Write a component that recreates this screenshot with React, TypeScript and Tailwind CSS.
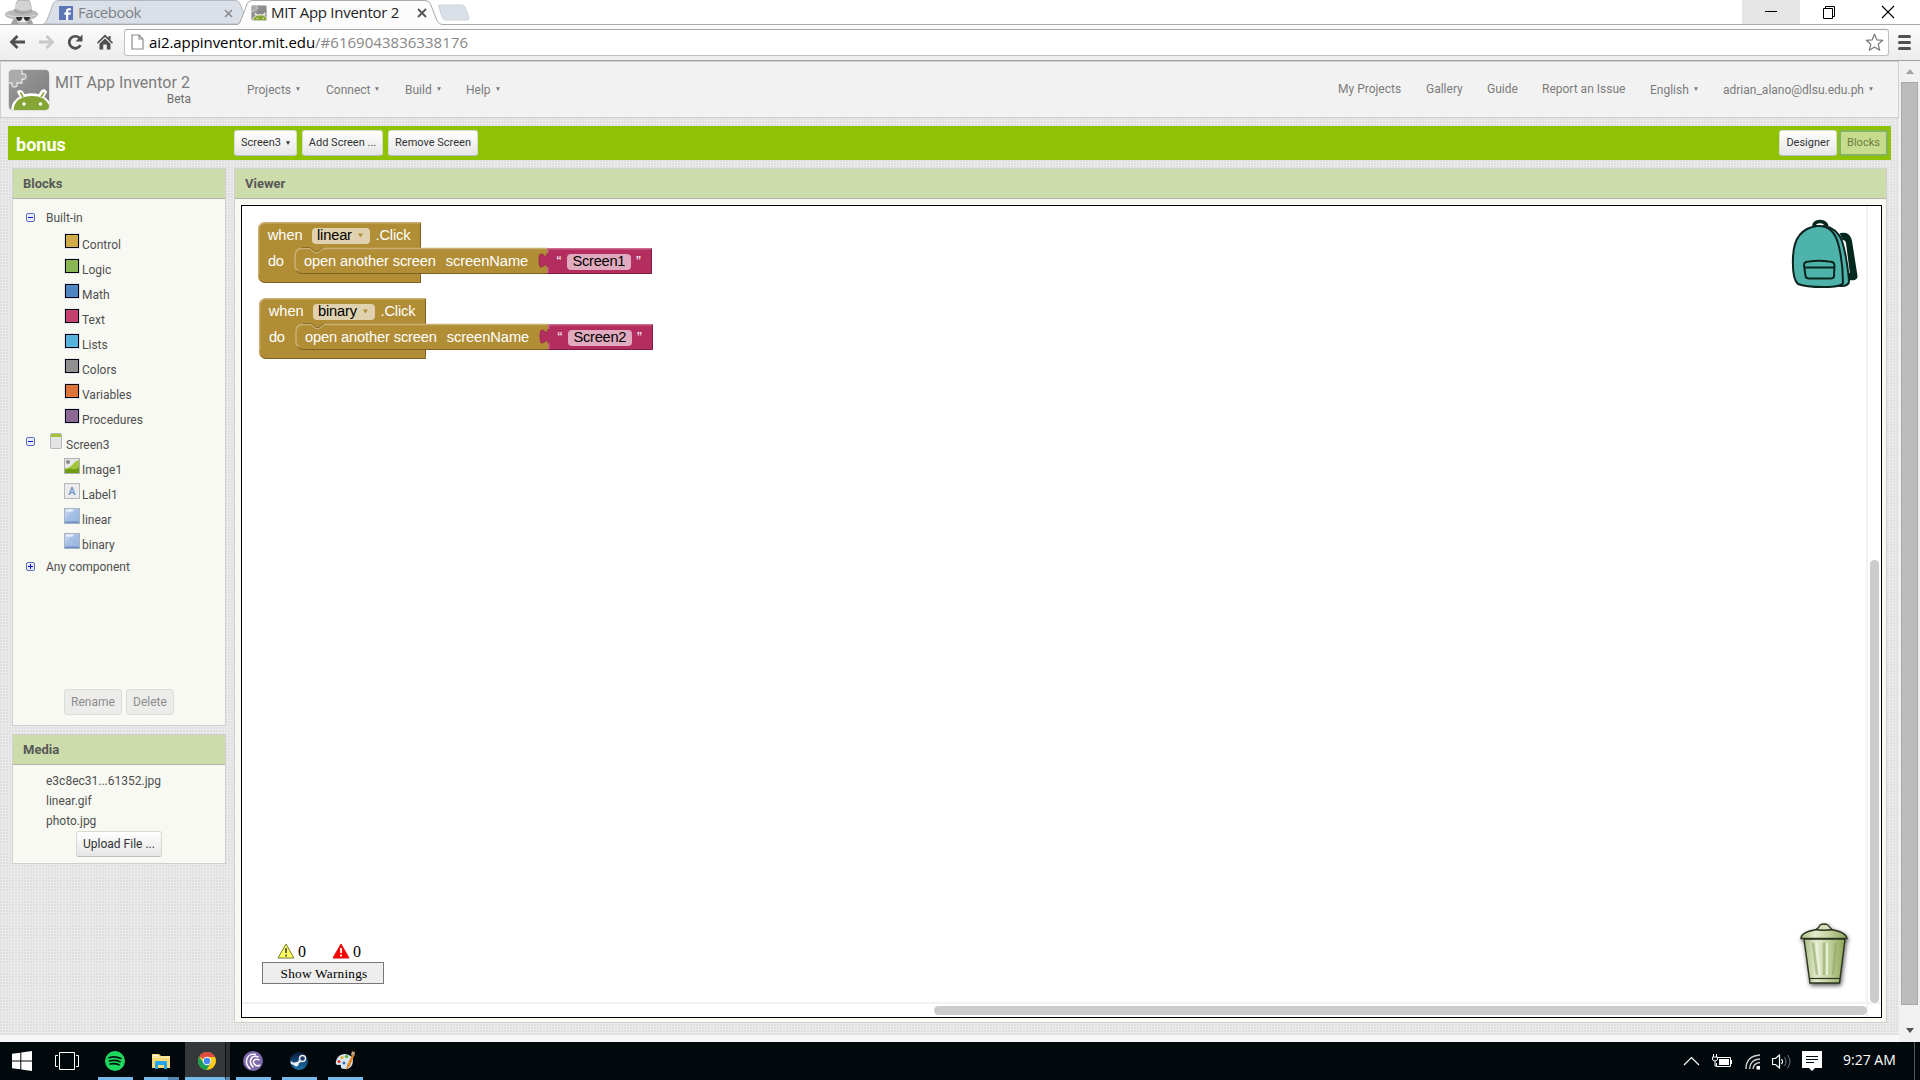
import React from 'react';

const Caret = ({ className = '' }: { className?: string }) => (
  <svg className={className} width="4" height="4" viewBox="0 0 4 4">
    <path d="M0 0.300H4L2 4Z" fill="currentColor" />
  </svg>
);

const AppLogo = ({ size }: { size: number }) => (
  <svg width={size} height={size} viewBox="0 0 42 42" className="block shrink-0">
    <defs>
      <linearGradient id="logo-grey" x1="0" y1="0" x2="1" y2="1">
        <stop offset="0" stopColor="#9a9a9a" />
        <stop offset="1" stopColor="#7d7d7d" />
      </linearGradient>
      <clipPath id="logo-clip">
        <rect x="1" y="1" width="40" height="40" rx="4" />
      </clipPath>
    </defs>
    <rect x="0.5" y="0.5" width="41" height="41" rx="4.5" fill="#c9c9c9" />
    <g clipPath="url(#logo-clip)">
      <rect x="1" y="1" width="40" height="40" fill="url(#logo-grey)" />
      <path d="M1 1H14V5Q18 4 18 8Q18 11 14 10V14H9Q10 18 6.5 18Q3 18 4 14H1Z" fill="#a9abac" />
      <path d="M14 1V5Q18 4 18 8Q18 11 14 10V14H9Q10 18 6.500 18Q3 18 4 14H1" fill="none" stroke="#e4e4e4" strokeWidth="1.300" />
      <path d="M4 41Q5 32 13 28L10 23Q12 21 14 23L16.5 26.5Q24 24 31 26.5L34 22Q36 20 38 23L35 28Q42 32 43 41Z" fill="#fff" stroke="#fff" strokeWidth="2" />
      <path d="M15 28L12.500 23.500M33 28L36 23.500" fill="none" stroke="#85a634" strokeWidth="1.600" />
      <path d="M5.500 41Q7 27 24 27Q40 27 42.500 41Z" fill="#85a634" />
      <circle cx="16" cy="35" r="1.8" fill="#fff" />
      <circle cx="32.500" cy="35" r="1.8" fill="#fff" />
    </g>
  </svg>
);

const Incognito = () => (
  <svg width="36" height="24" viewBox="0 0 36 24" className="block">
    <path d="M11 9Q12 0 14 0H25Q27 1 28 10Q35 12 34 15Q31 19 27 19L29 24H7L9 19Q2 18 1 15Q0 12 9 10Z" fill="#b9b9b9" />
    <path d="M11 8Q13 1 15 1H24Q26 2 27 9Q18 13 11 8Z" fill="#d4d4d4" />
    <path d="M10 9Q19 14 28 10L28 12Q19 16 10 12Z" fill="#a2a2a2" />
    <path d="M2 14Q18 19 33 14Q30 17 26 17H10Q4 17 2 14Z" fill="#d8d8d8" />
    <path d="M12 17H25L24 21Q19 24 13 21Z" fill="#ececec" />
    <path d="M12 17H18.500L18 19Q17 21 15 21Q12.500 21 12 17ZM19.500 17H26Q25.500 21 23 21Q20.500 21 19.500 17Z" fill="#333" />
    <path d="M7 24Q9 20 12 19L14 24ZM29 24Q28 20 25 19L23 24Z" fill="#a2a2a2" />
  </svg>
);

const Browser = () => (
  <div className="font-['Open_Sans',sans-serif]">
    <div className="relative flex h-6 bg-white">
      <div className="ml-1 w-9">
        <Incognito />
      </div>
      <div className="relative flex h-6 w-[202px] items-center">
        <svg width="202" height="24" viewBox="0 0 202 24" className="absolute left-[3px] top-0">
          <path d="M0.5 24Q3 23 4 20L10 4Q11.500 0.500 15 0.500H192Q196 0.500 197 4L201 14L196 24Z" fill="#dbe0e8" stroke="#b4b8bd" />
        </svg>
        <svg width="14" height="14" viewBox="0 0 14 14" className="relative ml-[19px] mt-px">
          <rect width="14" height="14" fill="#5d77b5" />
          <path d="M9.200 14V8.700H11.500L11.900 6.600H9.200V5.200Q9.200 4.200 10.400 4.200H12V2.200H9.800Q7 2.200 7 5V6.600H5.300V8.700H7V14Z" fill="#fff" />
        </svg>
        <span className="relative ml-[5px] w-[140px] text-[15px] leading-6 tracking-[-0.47px] text-[#7c8087]">Facebook</span>
        <svg width="9" height="9" viewBox="0 0 9 9" className="relative ml-[6px] mt-[2px]">
          <path d="M1 1L8 8M8 1L1 8" stroke="#878b90" strokeWidth="1.600" />
        </svg>
      </div>
      <div className="relative flex h-[25px] w-[204px] items-center">
        <svg width="206" height="25" viewBox="0 0 206 25" className="absolute left-[-5px] top-0">
          <path d="M0 25Q3 24 4 20L10 4Q11.500 0.500 15 0.500H188Q192 0.500 193.500 4L199 18Q201 24.500 206 24.500V25Z" fill="#fcfcfc" />
          <path d="M0 24.500Q3 24 4 20L10 4Q11.500 0.500 15 0.500H188Q192 0.500 193.500 4L199 18Q201 24.500 206 24.500" fill="none" stroke="#a9a9a9" />
        </svg>
        <div className="relative ml-[9px]">
          <AppLogo size={16} />
        </div>
        <span className="relative mb-[2px] ml-1 w-[146px] text-[15px] leading-6 tracking-[-0.28px] text-[#222]">MIT App Inventor 2</span>
        <svg width="10" height="10" viewBox="0 0 10 10" className="relative">
          <path d="M1 1L9 9M9 1L1 9" stroke="#555" strokeWidth="1.800" />
        </svg>
      </div>
      <svg width="34" height="18" viewBox="0 0 34 18" className="ml-[-9px] mt-1">
        <path d="M1.500 1H24Q27 1 28 3L32 13Q33 16 30 16H9Q6 16 5 13Z" fill="#dbe0e8" stroke="#cfd3d9" />
      </svg>
      <div className="ml-auto flex">
        <div className="flex h-6 w-[58px] items-center justify-center bg-[#e5e5e5]">
          <div className="mt-[-1px] h-px w-3 bg-black" />
        </div>
        <div className="flex w-[58px] items-center justify-center">
          <svg width="14" height="14" viewBox="0 0 14 14">
            <path d="M1.500 3.500H10.500V13.500H1.500ZM3.500 3.500V1.500H12.500V11.500H10.500" fill="none" stroke="#000" />
          </svg>
        </div>
        <div className="flex w-[62px] items-center justify-center pr-[2px]">
          <svg width="14" height="14" viewBox="0 0 14 14">
            <path d="M1 1L13 13M13 1L1 13" stroke="#000" strokeWidth="1.100" />
          </svg>
        </div>
      </div>
    </div>
    <div className="flex h-[37px] items-center border-b border-t border-b-[#a3a3a3] border-t-[#a9a9a9] bg-gradient-to-b from-[#fbfbfb] to-[#ececec] pb-px">
      <svg width="17" height="16" viewBox="0 0 17 16" className="ml-[9px]">
        <path d="M16 8H3M8.500 2L2.500 8L8.500 14" fill="none" stroke="#4f4f4f" strokeWidth="2.800" />
      </svg>
      <svg width="17" height="16" viewBox="0 0 17 16" className="ml-[12px]">
        <path d="M1 8H14M8.500 2L14.500 8L8.500 14" fill="none" stroke="#c8c8c8" strokeWidth="2.800" />
      </svg>
      <svg width="17" height="16" viewBox="0 0 17 16" className="ml-[12px]">
        <path d="M13.500 11.200A6 6 0 1 1 12.500 4" fill="none" stroke="#4f4f4f" strokeWidth="2.700" />
        <path d="M15.500 0.500V7.500H8.500Z" fill="#4f4f4f" />
      </svg>
      <svg width="16" height="16" viewBox="0 0 16 16" className="ml-[13px]">
        <path d="M8 0.500L11.500 4V2H13.500V6L16 8.500L15 9.700L8 3L1 9.700L0 8.500Z" fill="#4f4f4f" />
        <path d="M8 4.500L13.500 9.700V15.500H9.800V10.500H6.200V15.500H2.500V9.700Z" fill="#4f4f4f" />
      </svg>
      <div className="ml-[11px] flex h-[27px] w-[1765px] items-center rounded-[3px] border border-[#c0c0c0] border-t-[#a3a3a3] bg-white">
        <svg width="13" height="16" viewBox="0 0 13 16" className="ml-[6px]">
          <path d="M1 1H8L12 5V15H1ZM8 1V5H12" fill="#fff" stroke="#8b8b8b" strokeWidth="1.200" />
        </svg>
        <span className="mb-px ml-[5px] text-[15px] leading-5 tracking-[-0.07px] text-black">ai2.appinventor.mit.edu</span>
        <span className="mb-px text-[15px] leading-5 tracking-[0.03px] text-[#868686]">/#6169043836338176</span>
        <svg width="19" height="19" viewBox="0 0 19 19" className="ml-auto mr-1">
          <path d="M9.500 1.200L11.800 6.800L17.800 7.300L13.200 11.200L14.700 17.200L9.500 14L4.300 17.200L5.800 11.200L1.200 7.300L7.200 6.800Z" fill="none" stroke="#7a7a7a" strokeWidth="1.200" strokeLinejoin="round" />
        </svg>
      </div>
      <div className="ml-[9px] flex w-[13px] flex-col gap-[3px]">
        <div className="h-[3px] rounded-sm bg-[#505050]" />
        <div className="h-[3px] rounded-sm bg-[#505050]" />
        <div className="h-[3px] rounded-sm bg-[#505050]" />
      </div>
    </div>
  </div>
);

const MenuItem = ({ label, className, caret = true }: { label: string; className: string; caret?: boolean }) => (
  <div className={`flex shrink-0 items-center whitespace-nowrap ${className}`}>
    {label}
    {caret && <Caret className="mb-[2px] ml-[5px]" />}
  </div>
);

const Header = () => (
  <div className="flex h-[57px] w-[1899px] border border-[#cfcfcf] bg-[#f2f2f2] text-xs text-[#7c7c7c]">
    <div className="ml-[7px] mt-[7px]">
      <AppLogo size={42} />
    </div>
    <div className="ml-[5px] mt-[11px] w-[136px] text-right">
      <div className="whitespace-nowrap text-left text-base leading-5 tracking-[0.03px]">MIT App Inventor 2</div>
      <div className="mt-[-1px] text-xs leading-[14px] text-[#6e6e6e]">Beta</div>
    </div>
    <div className="ml-[56px] flex h-[57px] items-center">
      <MenuItem label="Projects" className="mb-px w-[79px]" />
      <MenuItem label="Connect" className="mb-px w-[79px]" />
      <MenuItem label="Build" className="mb-px w-[61px]" />
      <MenuItem label="Help" className="mb-px w-[60px]" />
    </div>
    <div className="ml-auto flex h-[57px] items-center">
      <MenuItem label="My Projects" caret={false} className="mb-[3px] w-[88px]" />
      <MenuItem label="Gallery" caret={false} className="mb-[3px] w-[61px]" />
      <MenuItem label="Guide" caret={false} className="mb-[3px] w-[55px]" />
      <MenuItem label="Report an Issue" caret={false} className="mb-[3px] w-[108px]" />
      <MenuItem label="English" className="mb-px w-[73px]" />
      <MenuItem label="adrian_alano@dlsu.edu.ph" className="mb-px w-[175px]" />
    </div>
  </div>
);

const BarButton = ({ label, className, caret = false }: { label: string; className: string; caret?: boolean }) => (
  <div className={`flex h-[26px] items-center justify-center whitespace-nowrap rounded-[3px] border text-[11px] ${className}`}>
    {label}
    {caret && <Caret className="mb-px ml-[5px]" />}
  </div>
);

const light = 'border-[#d6dccb] border-b-[#bdbdbd] bg-gradient-to-b from-white to-[#e6e6e6] text-[#333]';

const ProjectBar = () => (
  <div className="ml-2 mt-2 flex h-[34px] w-[1883px] items-center bg-[#8fc202]">
    <div className="ml-2 w-[218px] pt-1 text-lg font-bold leading-6 text-white">bonus</div>
    <BarButton label="Screen3" caret className={`w-[63px] ${light}`} />
    <BarButton label="Add Screen ..." className={`ml-[5px] w-[81px] ${light}`} />
    <BarButton label="Remove Screen" className={`ml-[5px] w-[90px] ${light}`} />
    <BarButton label="Designer" className={`ml-auto w-[58px] ${light}`} />
    <BarButton label="Blocks" className="ml-[2px] mr-[3px] w-[49px] border-2 border-[#84b35e] bg-[#c7db8f] text-[#6b7d3c]" />
  </div>
);

const PanelTitle = ({ title }: { title: string }) => (
  <div className="h-[30px] border-b border-[#b3b3ab] bg-[#ccdcaa] pl-[10px] text-[13px] font-bold leading-[30px] text-[#585858]">{title}</div>
);

const Expander = ({ plus = false }: { plus?: boolean }) => (
  <svg width="9" height="9" viewBox="0 0 9 9" className="block shrink-0">
    <rect x="0.500" y="0.500" width="8" height="8" rx="1.500" fill="#e8edf8" stroke="#5b6fb8" />
    <path d={plus ? 'M2 4.500H7M4.500 2V7' : 'M2 4.500H7'} stroke="#1010c0" />
  </svg>
);

const drawers = [
  { name: 'Control', color: 'bg-[#cfab4a]' },
  { name: 'Logic', color: 'bg-[#88b653]' },
  { name: 'Math', color: 'bg-[#4f86c2]' },
  { name: 'Text', color: 'bg-[#c5416f]' },
  { name: 'Lists', color: 'bg-[#57b3dc]' },
  { name: 'Colors', color: 'bg-[#8f8f8f]' },
  { name: 'Variables', color: 'bg-[#dc7438]' },
  { name: 'Procedures', color: 'bg-[#8e6796]' },
];

const ImageIcon = () => (
  <svg width="16" height="16" viewBox="0 0 16 16">
    <rect x="0.500" y="0.500" width="15" height="15" fill="#e6e6e6" stroke="#b0b0b0" />
    <circle cx="4" cy="4" r="2" fill="#8a8a8a" />
    <path d="M1 10Q5 11 9 6Q12 2.500 15 2V15H1Z" fill="#a3c43a" />
    <path d="M1 12Q5 9.500 9 11Q12 12 15 9V15H1Z" fill="#6d9c12" />
  </svg>
);

const LabelIcon = () => (
  <div className="flex h-4 w-4 items-center justify-center border border-[#b8b8b8] bg-[#ececec] text-[11px] font-bold leading-none text-[#7b9dce]">A</div>
);

const ButtonIcon = () => (
  <svg width="16" height="16" viewBox="0 0 16 16">
    <defs>
      <linearGradient id="btn-blue" x1="0" y1="0" x2="1" y2="1">
        <stop offset="0" stopColor="#b6cbea" />
        <stop offset="1" stopColor="#93b3df" />
      </linearGradient>
    </defs>
    <rect x="0.500" y="0.500" width="15" height="15" fill="url(#btn-blue)" stroke="#a8b4c8" />
    <path d="M1 12Q3 4 13 1H1Z" fill="#c9d9f0" opacity="0.600" />
    <path d="M2 2.500H9" stroke="#eef3fb" strokeWidth="2" />
    <path d="M1 14.300H15" stroke="#7391c4" strokeWidth="1.600" />
  </svg>
);

const ScreenIcon = () => (
  <svg width="12" height="16" viewBox="0 0 12 16">
    <rect x="0.500" y="0.500" width="11" height="15" rx="1" fill="#e4e4e4" stroke="#b5b5b5" />
    <path d="M1 1H11V4H1Z" fill="#a3c43a" />
  </svg>
);

const TreeItem = ({ icon, name }: { icon: React.ReactNode; name: string }) => (
  <div className="flex h-[25px] pl-[51px]">
    <div className="mt-1 w-[18px]">{icon}</div>
    <span className="mt-2 leading-4">{name}</span>
  </div>
);

const SideButton = ({ label, className }: { label: string; className: string }) => (
  <div className={`flex h-[26px] items-center justify-center rounded-[3px] border ${className}`}>{label}</div>
);

const Sidebar = () => (
  <div className="w-[214px] text-xs text-[#4f4f4f]">
    <div className="flex h-[558px] flex-col border border-[#cfcfcf] bg-[#f8f9f3]">
      <PanelTitle title="Blocks" />
      <div className="mb-px mt-[8px] flex h-[21px] items-center pl-[13px]">
        <Expander />
        <span className="ml-[11px] leading-4">Built-in</span>
      </div>
      {drawers.map((d) => (
        <TreeItem
          key={d.name}
          name={d.name}
          icon={<div className={`ml-px mt-px h-[14px] w-[14px] border border-black outline-1 outline-[#dfe5f2] ${d.color}`} />}
        />
      ))}
      <div className="flex h-[25px] pl-[13px]">
        <div className="mt-2 w-6">
          <Expander />
        </div>
        <div className="mt-1 w-4">
          <ScreenIcon />
        </div>
        <span className="mt-2 leading-4">Screen3</span>
      </div>
      <TreeItem icon={<ImageIcon />} name="Image1" />
      <TreeItem icon={<LabelIcon />} name="Label1" />
      <TreeItem icon={<ButtonIcon />} name="linear" />
      <TreeItem icon={<ButtonIcon />} name="binary" />
      <div className="flex h-[25px] items-center pl-[13px]">
        <Expander plus />
        <span className="ml-[11px] leading-4">Any component</span>
      </div>
      <div className="mb-[10px] mt-auto flex gap-1 pl-[51px] text-[#8c8c8c]">
        <SideButton label="Rename" className="w-[58px] border-[#dcdcdc] bg-[#ececea]" />
        <SideButton label="Delete" className="w-[48px] border-[#dcdcdc] bg-[#ececea]" />
      </div>
    </div>
    <div className="mt-2 h-[130px] border border-[#cfcfcf] bg-[#f8f9f3]">
      <PanelTitle title="Media" />
      <div className="ml-[33px] mt-[6px] leading-[20px]">
        <div>e3c8ec31...61352.jpg</div>
        <div>linear.gif</div>
        <div>photo.jpg</div>
      </div>
      <SideButton label="Upload File ..." className={`ml-[63px] w-[86px] ${light}`} />
    </div>
  </div>
);

const EventBlock = ({ x, y, name, screen, extra, nameWidth }: { x: number; y: number; name: string; screen: string; extra: number; nameWidth: number }) => {
  const r = 163 + extra;
  return (
    <g transform={`translate(${x} ${y})`} fontSize="14.67" fontFamily="Liberation Sans, sans-serif">
      <path d={`M0 8Q0 0 8 0H${r}V61H8Q0 61 0 53Z`} fill="#b18e35" />
      <path d={`M0.700 53V8Q0.700 0.700 8 0.700H${r}`} fill="none" stroke="#c9b072" strokeWidth="1.500" />
      <path d={`M${r - 0.500} 1V26M${r - 0.500} 51.500V60.500H8Q4 60.500 2 58`} fill="none" stroke="#7c6325" />
      <path d="M37 34Q37 26.500 44 26.500H51L56 30.500H60L65 26.500H290V51.500H44Q37 51.500 37 44Z" fill="#b18e35" />
      <path d="M40 49Q37 47 37 44V34Q37 26.500 44 26.500H52L57 30.500H60L65 26.500H290" fill="none" stroke="#c9b072" strokeWidth="1.500" />
      <path d="M38 48.500Q40 51.500 44 51.500H290" fill="none" stroke="#7c6325" />
      <path d="M44 25.500H52L57 29.500H60L65 25.500" fill="none" stroke="#7c6325" strokeWidth="0.800" />
      <path d="M394 26H289V31C289 41 281 23 281 38.500S289 36 289 46V52H394Z" fill="#b32d5e" />
      <path d="M289 31C289 41 281 23 281 38.500S289 36 289 46" fill="none" stroke="#8f2149" strokeWidth="0.700" />
      <path d="M394 26.700H289.700V31M289.700 45V51" fill="none" stroke="#ca6c8e" strokeWidth="1.400" />
      <path d="M289.500 51.500H393.500V27" fill="none" stroke="#7d1f42" />
      <rect x="54" y="6" width={58 + extra} height="16" rx="4" fill="#e0d2ae" />
      <path d={`M${100 + extra} 11.500H${105 + extra}L${102.500 + extra} 15.500Z`} fill="#b18e35" />
      <rect x="309" y="32" width="64" height="16" rx="4" fill="#e1abbf" />
      <g fill="#fff">
        <text x="9.700" y="18" textLength="35">when</text>
        <text x={117.500 + extra} y="18" textLength="35">.Click</text>
        <text x="10" y="43.500" textLength="16">do</text>
        <text x="46" y="43.700" textLength="132">open another screen</text>
        <text x="187.700" y="43.700" textLength="82.500">screenName</text>
        <text x="298.500" y="43.700">“</text>
        <text x="378" y="43.700">”</text>
      </g>
      <g fill="#000">
        <text x="59" y="18" textLength={nameWidth}>{name}</text>
        <text x="314.500" y="43.700" textLength="53">{screen}</text>
      </g>
    </g>
  );
};

const Backpack = () => (
  <svg width="68" height="70" viewBox="0 0 68 70">
    <path d="M50 15Q58 13 60 22L65.500 57Q66 61 58 60L57 55H60L56 24Q55 20 52 20Z" fill="#03291f" stroke="#03291f" strokeWidth="2" strokeLinejoin="round" />
    <path d="M23 7.500Q23 2.500 29 2.500Q35 2.500 36 8" fill="none" stroke="#03291f" strokeWidth="3.500" />
    <path d="M33 7Q46 9 51 22Q56 38 58 62Q58 67 50 67L40 66Z" fill="#4eb4ab" stroke="#0c2320" strokeWidth="2" />
    <path d="M26 7Q42 6 47 24Q52 42 52 64Q50 68 33 68Q14 68 7 65Q1 60 2 38Q3 10 26 7Z" fill="#4eb4ab" stroke="#0c2320" strokeWidth="2" />
    <path d="M13 46Q13 42.500 18 42.500Q28 41 38 42.500Q43 42.500 43.500 46L43 57Q43 59.500 39 59.500H18Q15 59.500 14.500 57ZM13 48.500H43.500" fill="none" stroke="#0c2320" strokeWidth="2" />
  </svg>
);

const TrashCan = () => (
  <svg width="52" height="68" viewBox="0 0 52 68" className="drop-shadow-[1px_2px_2px_rgba(0,0,0,0.65)]">
    <defs>
      <linearGradient id="can" x1="0" y1="0" x2="1" y2="0">
        <stop offset="0" stopColor="#a9bc80" />
        <stop offset="0.300" stopColor="#e3ebcf" />
        <stop offset="0.600" stopColor="#c3d29e" />
        <stop offset="1" stopColor="#8fa65a" />
      </linearGradient>
    </defs>
    <path d="M4 17H45L39.500 61H10Z" fill="url(#can)" stroke="#2d3420" strokeWidth="1.400" />
    <path d="M9.500 56.500H40" stroke="#2d3420" strokeWidth="1.200" />
    <path d="M13 21L17 53M24 21V53M36 21L33 53" stroke="#93a76a" strokeWidth="2.500" opacity="0.600" />
    <path d="M16.500 21L20 53M27 21V53" stroke="#eff4e2" strokeWidth="2" opacity="0.800" />
    <path d="M1 16.500Q1 10 17 7.500H31Q46 10 47 16.500Z" fill="url(#can)" stroke="#2d3420" strokeWidth="1.400" />
    <path d="M16 7.500Q19 6 20 3Q24 1 28 3Q30 6 32 7.500Q24 9 16 7.500Z" fill="#d5e0ba" stroke="#2d3420" strokeWidth="1.300" />
  </svg>
);

const Warn = ({ red = false }: { red?: boolean }) => (
  <svg width="18" height="16" viewBox="0 0 18 16">
    <path d="M9 1L17 15H1Z" fill={red ? '#f00' : '#ffff5c'} stroke={red ? '#e01010' : '#777733'} strokeLinejoin="round" />
    <path d="M9 5V10M9 11.500V13.500" stroke={red ? '#fff' : '#555'} strokeWidth="1.800" />
  </svg>
);

const Viewer = () => (
  <div className="ml-2 h-[855px] w-[1653px] border border-[#cfcfcf] bg-[#f8f9f3]">
    <PanelTitle title="Viewer" />
    <div className="relative ml-[6px] mt-[6px] h-[813px] w-[1641px] border border-black bg-white">
      <svg width="440" height="170" viewBox="0 0 440 170" className="absolute left-0 top-0">
        <EventBlock x={16} y={16} name="linear" screen="Screen1" extra={0} nameWidth={35} />
        <EventBlock x={17} y={92} name="binary" screen="Screen2" extra={4} nameWidth={39} />
      </svg>
      <div className="absolute left-[1549px] top-[13px]">
        <Backpack />
      </div>
      <div className="absolute left-[1558px] top-[716px]">
        <TrashCan />
      </div>
      <div className="absolute left-[20px] top-[735px] w-[122px] font-['Liberation_Serif',serif] text-black">
        <div className="flex h-5 items-center pl-[15px] text-base">
          <Warn />
          <span className="ml-[3px] w-[31px] pt-px">0</span>
          <div className="ml-[3px]">
            <Warn red />
          </div>
          <span className="ml-[3px] pt-px">0</span>
        </div>
        <div className="mt-px flex h-[22px] items-center justify-center border-[1.5px] border-[#777] bg-[#eee] pl-[2px] pt-[2px] text-[13.3px] tracking-[0.23px]">Show Warnings</div>
      </div>
      <div className="absolute right-[13px] top-0 h-full w-[2px] bg-[#f1f1f1]" />
      <div className="absolute bottom-[13px] left-0 h-[2px] w-full bg-[#f1f1f1]" />
      <div className="absolute bottom-[14px] right-[2px] h-[443px] w-[9px] rounded-full bg-[#ccc]" />
      <div className="absolute bottom-[2px] right-[14px] h-[9px] w-[933px] rounded-full bg-[#ccc]" />
    </div>
  </div>
);

const TaskIcon = ({ children, className }: { children?: React.ReactNode; className: string }) => (
  <div className={`relative flex h-[38px] items-center justify-center ${className}`}>{children}</div>
);

const Taskbar = () => (
  <div className="flex h-[38px] items-center bg-[#02090d] text-white">
    <TaskIcon className="w-[44px]">
      <svg width="20" height="20" viewBox="0 0 20 20">
        <path d="M0 2.800L8.300 1.700V9.500H0ZM9.300 1.500L20 0V9.500H9.300ZM0 10.500H8.300V18.300L0 17.200ZM9.300 10.500H20V20L9.300 18.500Z" fill="#fff" />
      </svg>
    </TaskIcon>
    <TaskIcon className="w-[46px]">
      <svg width="24" height="18" viewBox="0 0 24 18">
        <path d="M4.500 0.500H19.500V17.500H4.500ZM3 3.500H0.500V14.500H3M21 3.500H23.500V14.500H21" fill="none" stroke="#fff" />
      </svg>
    </TaskIcon>
    <TaskIcon className="ml-2 w-[35px] border-b-[3px] border-[#76b9ed] pr-px">
      <svg width="20" height="20" viewBox="0 0 20 20" className="mt-[3px]">
        <circle cx="10" cy="10" r="10" fill="#1ed760" />
        <path d="M4 6.700Q10 4.800 16 7.500M4.500 10Q10 8.300 15 10.700M5 13Q10 11.800 14 13.800" fill="none" stroke="#03120a" strokeWidth="1.700" strokeLinecap="round" />
      </svg>
    </TaskIcon>
    <TaskIcon className="ml-[11px] w-[35px] border-b-[3px] border-[#76b9ed] pr-px">
      <svg width="18" height="17" viewBox="0 0 18 17" className="mt-1">
        <path d="M0 1H7L9 3H18V15H0Z" fill="#fbd876" />
        <path d="M1 2H6V3.500H1Z" fill="#fff" />
        <path d="M0 3H18V5H0Z" fill="#fde59b" />
        <path d="M3 16V9Q3 8 4 8H14Q15 8 15 9V16H12V12H6V16Z" fill="#21a6e8" />
      </svg>
      <div className="absolute bottom-[-3px] right-0 h-[3px] w-[11px] bg-[#5686af]" />
    </TaskIcon>
    <TaskIcon className="ml-[6px] w-[40px] border-b-[3px] border-[#76b9ed] bg-[#34383a]">
      <svg width="18" height="18" viewBox="0 0 18 18" className="ml-1 mt-[3px]">
        <circle cx="9" cy="9" r="9" fill="#fbc916" />
        <path d="M9 9L1.200 4.500A9 9 0 0 1 17 5H9Z" fill="#dd4b3e" />
        <path d="M1.200 4.500A9 9 0 0 0 8.500 18L12.500 11L5.500 11Z" fill="#1b9e58" />
        <circle cx="9" cy="9" r="4.200" fill="#fff" />
        <circle cx="9" cy="9" r="3.300" fill="#4787f3" />
      </svg>
    </TaskIcon>
    <TaskIcon className="w-[5px] border-b-[3px] border-l border-b-[#5686af] border-l-[#111] bg-[#2c3032]" />
    <TaskIcon className="ml-[6px] w-[35px] border-b-[3px] border-[#76b9ed] pr-px">
      <svg width="20" height="20" viewBox="0 0 20 20" className="mt-[3px]">
        <circle cx="10" cy="10" r="10" fill="#7d68ac" />
        <path d="M13 3.500C4 1 0 12 7.500 18M15.500 6C8 3 4.500 11 10.500 16.500M16.500 9C11 6.500 8 11.500 13 14.500Q15 15.300 17 14" fill="none" stroke="#fff" strokeWidth="1.500" />
      </svg>
    </TaskIcon>
    <TaskIcon className="ml-[11px] w-[35px] border-b-[3px] border-[#76b9ed]">
      <svg width="18" height="18" viewBox="0 0 18 18" className="ml-[-2px] mt-[3px]">
        <defs>
          <linearGradient id="steam" x1="0" y1="0" x2="0" y2="1">
            <stop offset="0" stopColor="#0b1a3c" />
            <stop offset="1" stopColor="#1a74ad" />
          </linearGradient>
        </defs>
        <circle cx="9" cy="9" r="9" fill="url(#steam)" />
        <path d="M0.500 9L6 11.500L9 8L13 5L14 8L9.500 11L6 14L1 12Z" fill="#dfe6ee" />
        <circle cx="12.500" cy="6.500" r="3" fill="#233b66" stroke="#e9eef5" strokeWidth="1.400" />
        <circle cx="6.300" cy="12.300" r="2.200" fill="#e9eef5" />
      </svg>
    </TaskIcon>
    <TaskIcon className="ml-[11px] w-[35px] border-b-[3px] border-[#76b9ed] pr-[2px]">
      <svg width="22" height="20" viewBox="0 0 22 20" className="mt-[2px]">
        <path d="M2 10Q4 3 11 3Q18 4 19 9Q19 18 11 18Q6 18 7 15Q7 13 4 14Q1 14 2 10Z" fill="#d6e8f5" />
        <circle cx="5" cy="10.500" r="1.600" fill="#e0382d" />
        <circle cx="8" cy="6.500" r="1.600" fill="#efa926" />
        <circle cx="12.500" cy="5.500" r="1.600" fill="#56ad35" />
        <circle cx="10" cy="12" r="1.500" fill="#3b6ab2" />
        <path d="M12 19L13 14L18 4L20 5L16 15Z" fill="#e28a2a" />
        <path d="M17 4L18 0L19.500 1L21 0.500L20.500 5Z" fill="#c8a274" />
      </svg>
    </TaskIcon>
    <div className="ml-auto flex h-[38px] items-center">
      <svg width="17" height="10" viewBox="0 0 17 10">
        <path d="M1 9L8.500 1.500L16 9" fill="none" stroke="#fff" strokeWidth="1.200" />
      </svg>
      <svg width="21" height="14" viewBox="0 0 21 14" className="ml-[12px]">
        <path d="M5.500 3.500H18.500V12.500H4.500V9M19.500 6V10" fill="none" stroke="#fff" />
        <path d="M7 5H17V11H7Z" fill="#fff" />
        <path d="M1.500 0V3M4.500 0V3M0.500 3H5.500V5Q5.500 7 3 7Q0.500 7 0.500 5ZM3 7V12H5" fill="none" stroke="#fff" />
      </svg>
      <svg width="16" height="16" viewBox="0 0 16 16" className="ml-[12px] mt-[2px]">
        <path d="M1 15Q1 2 15 1M4.500 15Q5 5.500 15 5M8 15Q8.500 9 15 8.500" fill="none" stroke="#ccc" strokeWidth="1.400" />
        <path d="M11.500 12H15V15.500H11.500Z" fill="#fff" />
      </svg>
      <svg width="21" height="17" viewBox="0 0 21 17" className="ml-[11px]">
        <path d="M0.500 5.500H3.500L7.500 2V15L3.500 11.500H0.500ZM9.500 6Q11.500 8.500 9.500 11" fill="none" stroke="#fff" strokeWidth="1.200" />
        <path d="M12.500 4Q15.500 8.500 12.500 13M15.500 2Q20.500 8.500 15.500 15" fill="none" stroke="#5f6568" strokeWidth="1.200" />
      </svg>
      <svg width="20" height="20" viewBox="0 0 20 20" className="ml-[9px]">
        <path d="M0 0H20V17H13L10 20L7 17H0Z" fill="#fff" />
        <path d="M4 5.500H16M4 8.500H16M4 11.500H12" stroke="#02090d" />
      </svg>
      <span className="ml-[21px] w-[71px] pb-[3px] font-['Open_Sans',sans-serif] text-sm">9:27 AM</span>
      <div className="mr-[5px] h-full w-px bg-[#50575b]" />
    </div>
  </div>
);

export default function App() {
  return (
    <div className="flex h-[1080px] w-[1920px] flex-col overflow-hidden bg-white font-[Roboto,sans-serif]">
      <Browser />
      <div className="flex h-[981px]">
        <div className="w-[1899px]">
          <div className="h-[974px] bg-[#ebebeb] bg-[radial-gradient(circle_at_1px_1px,#dfdfdf_0.8px,transparent_0.9px)] bg-[length:3px_3px]">
            <Header />
            <ProjectBar />
            <div className="ml-3 mt-2 flex items-start">
              <Sidebar />
              <Viewer />
            </div>
          </div>
          <div className="h-[7px] bg-[#f7f7f7]" />
        </div>
        <div className="flex w-[21px] flex-col items-center bg-[#f1f1f1] text-[#505050]">
          <svg width="8" height="5" viewBox="0 0 8 5" className="mt-[8px] text-[#a3a3a3]">
            <path d="M0 5H8L4 0Z" fill="currentColor" />
          </svg>
          <div className="mt-[8px] h-[923px] w-[17px] border border-[#a8a8a8] bg-[#bcbcbc]" />
          <svg width="8" height="5" viewBox="0 0 8 5" className="mt-[23px]">
            <path d="M0 0H8L4 5Z" fill="currentColor" />
          </svg>
        </div>
      </div>
      <Taskbar />
    </div>
  );
}
